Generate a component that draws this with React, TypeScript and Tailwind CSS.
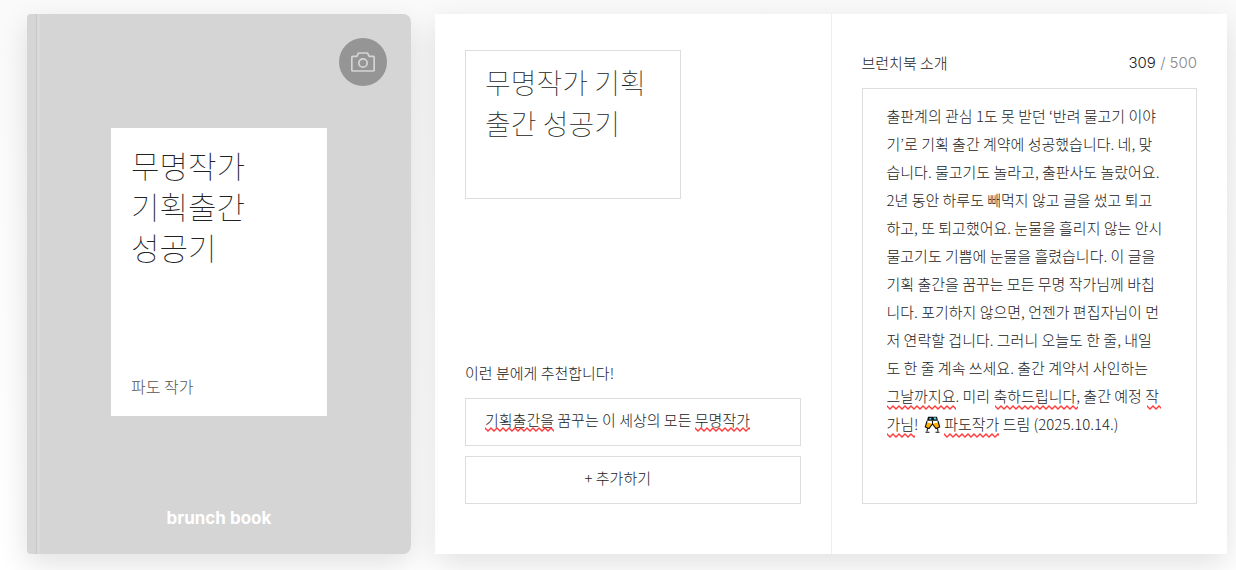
import React, { useState } from 'react';

const INTRO = [
  '출판계의 관심 1도 못 받던 ‘반려 물고기 이야',
  '기’로 기획 출간 계약에 성공했습니다. 네, 맞',
  '습니다. 물고기도 놀라고, 출판사도 놀랐어요.',
  '2년 동안 하루도 빼먹지 않고 글을 썼고 퇴고',
  '하고, 또 퇴고했어요. 눈물을 흘리지 않는 안시',
  '물고기도 기쁨에 눈물을 흘렸습니다. 이 글을',
  '기획 출간을 꿈꾸는 모든 무명 작가님께 바칩',
  '니다. 포기하지 않으면, 언젠가 편집자님이 먼',
  '저 연락할 겁니다. 그러니 오늘도 한 줄, 내일',
  '도 한 줄 계속 쓰세요. 출간 계약서 사인하는',
  '그날까지요. 미리 축하드립니다, 출간 예정 작',
  '가님! 🥂 파도작가 드림 (2025.10.14.)',
].join('\n');

const CameraIcon: React.FC = () => (
  <svg width="24" height="20" viewBox="0 0 24 20" fill="none" stroke="#d5d5d5" strokeWidth="1.700" strokeLinejoin="round" aria-hidden="true">
    <path d="M2 4.300h3.800L7.500 1h9l1.700 3.300H22a1.200 1.200 0 0 1 1.200 1.200v12.300A1.200 1.200 0 0 1 22 19H2a1.200 1.200 0 0 1-1.200-1.200V5.500A1.200 1.200 0 0 1 2 4.300z" />
    <circle cx="12" cy="11" r="4.200" />
  </svg>
);

// Two clinking glasses with an outline, laid over the emoji of the intro
const GlassesIcon: React.FC<{ className: string }> = ({ className }) => (
  <svg width="19" height="19" viewBox="-1 -1 18 19" className={`pointer-events-none absolute ${className}`} aria-hidden="true">
    <rect x="-1" y="-1" width="18" height="19" fill="#fff" />
    <path d="M3.500 .8h9l1 4L15.500 11l-3.500 1-3.500-4.500L4.500 12 .8 11l2-6z" fill="#fff" />
    <path d="M2.300 6.500 1 11l3.500 1.500L8 8.500l3.500 4L15 11l-1.300-4.500-3 .5L8 8 5.300 7z" fill="#ffb000" />
    <path d="M3.500 .8h9l1 4H2.500z" fill="#111" />
    <path d="M5 2h1.800v1.500H4.500zM9 1.500h2.500L12 3.500H9.500z" fill="#5bd3f2" />
    <path d="M2.500 5 .8 11 4.500 12.500 8 8l3.500 4.500L15.200 11 13.500 5M3 12l-.5 3.500M13 12l.5 3.500M1 16.200h4M11 16.200h4M8 5v3" fill="none" stroke="#111" strokeWidth="1.100" />
  </svg>
);

// Spell check mark, placed over the text of a field
const Squiggle: React.FC<{ id: string; className: string }> = ({ id, className }) => (
  <svg className={`pointer-events-none absolute h-[5px] ${className}`} aria-hidden="true">
    <defs>
      <pattern id={id} width="6" height="5" patternUnits="userSpaceOnUse">
        <path d="M-1.500 2.500 L0 1 L3 4 L6 1 L7.500 2.500" fill="none" stroke="#ff3b3b" strokeWidth="1.300" />
      </pattern>
    </defs>
    <rect width="100%" height="5" fill={`url(#${id})`} />
  </svg>
);

const Cover: React.FC = () => (
  <section className="relative flex h-[540px] w-96 shrink-0 flex-col items-center rounded-l-sm rounded-r-lg bg-[#d5d5d5] shadow-[0_10px_30px_rgba(0,0,0,0.12)]">
    <div className="absolute inset-y-0 left-[9px] w-1 border-l border-[#c8c8c8] bg-[#dadada]" />
    <button
      type="button"
      aria-label="표지 이미지"
      className="absolute top-6 right-6 flex size-12 items-center justify-center rounded-full bg-[#959595]"
    >
      <CameraIcon />
    </button>
    <div className="mt-[114px] flex h-72 w-[216px] flex-col justify-between bg-white px-5 pt-4 pb-[18px]">
      <h1 className="text-[31px] leading-[41px] font-thin text-[#222]">
        무명작가
        <br />
        기획출간
        <br />
        성공기
      </h1>
      <p className="text-base leading-6 text-[#555]">파도 작가</p>
    </div>
    <p className="mt-auto mb-[22px] font-['Inter'] text-[17px] leading-7 font-bold text-white">brunch book</p>
  </section>
);

const App: React.FC = () => {
  const [title, setTitle] = useState('무명작가 기획출간 성공기');
  const [reader, setReader] = useState('기획출간을 꿈꾸는 이 세상의 모든 무명작가');
  const [intro, setIntro] = useState(INTRO);

  return (
    <main className="flex min-h-screen items-start gap-6 overflow-hidden bg-linear-to-b from-[#fafafa] to-white pt-3.5 pr-[9px] pb-4 pl-[27px] font-['Noto_Sans_CJK_KR',sans-serif] font-light text-[#222]">
      <Cover />
      <div className="flex h-[540px] min-w-0 flex-1 bg-white shadow-[0_10px_30px_rgba(0,0,0,0.12)]">
        <section className="flex flex-1 flex-col px-[30px] pt-9 pb-[50px]">
          <textarea
            aria-label="제목"
            value={title}
            onChange={(e) => setTitle(e.target.value)}
            className="h-[149px] w-[216px] resize-none overflow-hidden border border-[#ddd] px-[19px] py-[11px] text-[28px] leading-[41px] font-thin break-all outline-none"
          />
          <label htmlFor="reader" className="mt-auto mb-[13px] text-[15px] leading-6">
            이런 분에게 추천합니다!
          </label>
          <div className="relative mb-2.5">
            <input
              id="reader"
              value={reader}
              onChange={(e) => setReader(e.target.value)}
              className="block h-12 w-full border border-[#ddd] px-[19px] pb-1.5 text-[15px] outline-none"
            />
            <Squiggle id="reader-first" className="top-[29px] left-5 w-[69px]" />
            <Squiggle id="reader-last" className="top-[29px] left-[230px] w-[55px]" />
          </div>
          <button type="button" className="h-12 border border-[#ddd] pr-[30px] pb-1 text-[15px]">
            + 추가하기
          </button>
        </section>
        <section className="flex flex-1 flex-col border-l border-[#eee] px-[30px] pt-9 pb-[50px]">
          <div className="mb-3 flex items-center justify-between leading-[26px]">
            <label htmlFor="intro" className="text-[15px]">
              브런치북 소개
            </label>
            <p className="font-['Inter'] text-[15px] text-[#888]">
              <span className="text-[#222]">309</span> / 500
            </p>
          </div>
          <div className="relative flex flex-1">
            <textarea
              id="intro"
              value={intro}
              onChange={(e) => setIntro(e.target.value)}
              className="w-full resize-none overflow-hidden border border-[#ddd] px-6 py-[13px] text-[15px] leading-7 break-all outline-none"
            />
            <Squiggle id="intro-day" className="top-[317px] left-[25px] w-[69px]" />
            <Squiggle id="intro-cheer" className="top-[317px] left-[133px] w-[83px]" />
            <Squiggle id="intro-writer" className="top-[317px] left-[285px] w-3.5" />
            <Squiggle id="intro-writer-end" className="top-[345px] left-[25px] w-7" />
            <GlassesIcon className="top-[327px] left-[61px]" />
            <Squiggle id="intro-name" className="top-[345px] left-[82px] w-[55px]" />
          </div>
        </section>
      </div>
    </main>
  );
};

export default App;
